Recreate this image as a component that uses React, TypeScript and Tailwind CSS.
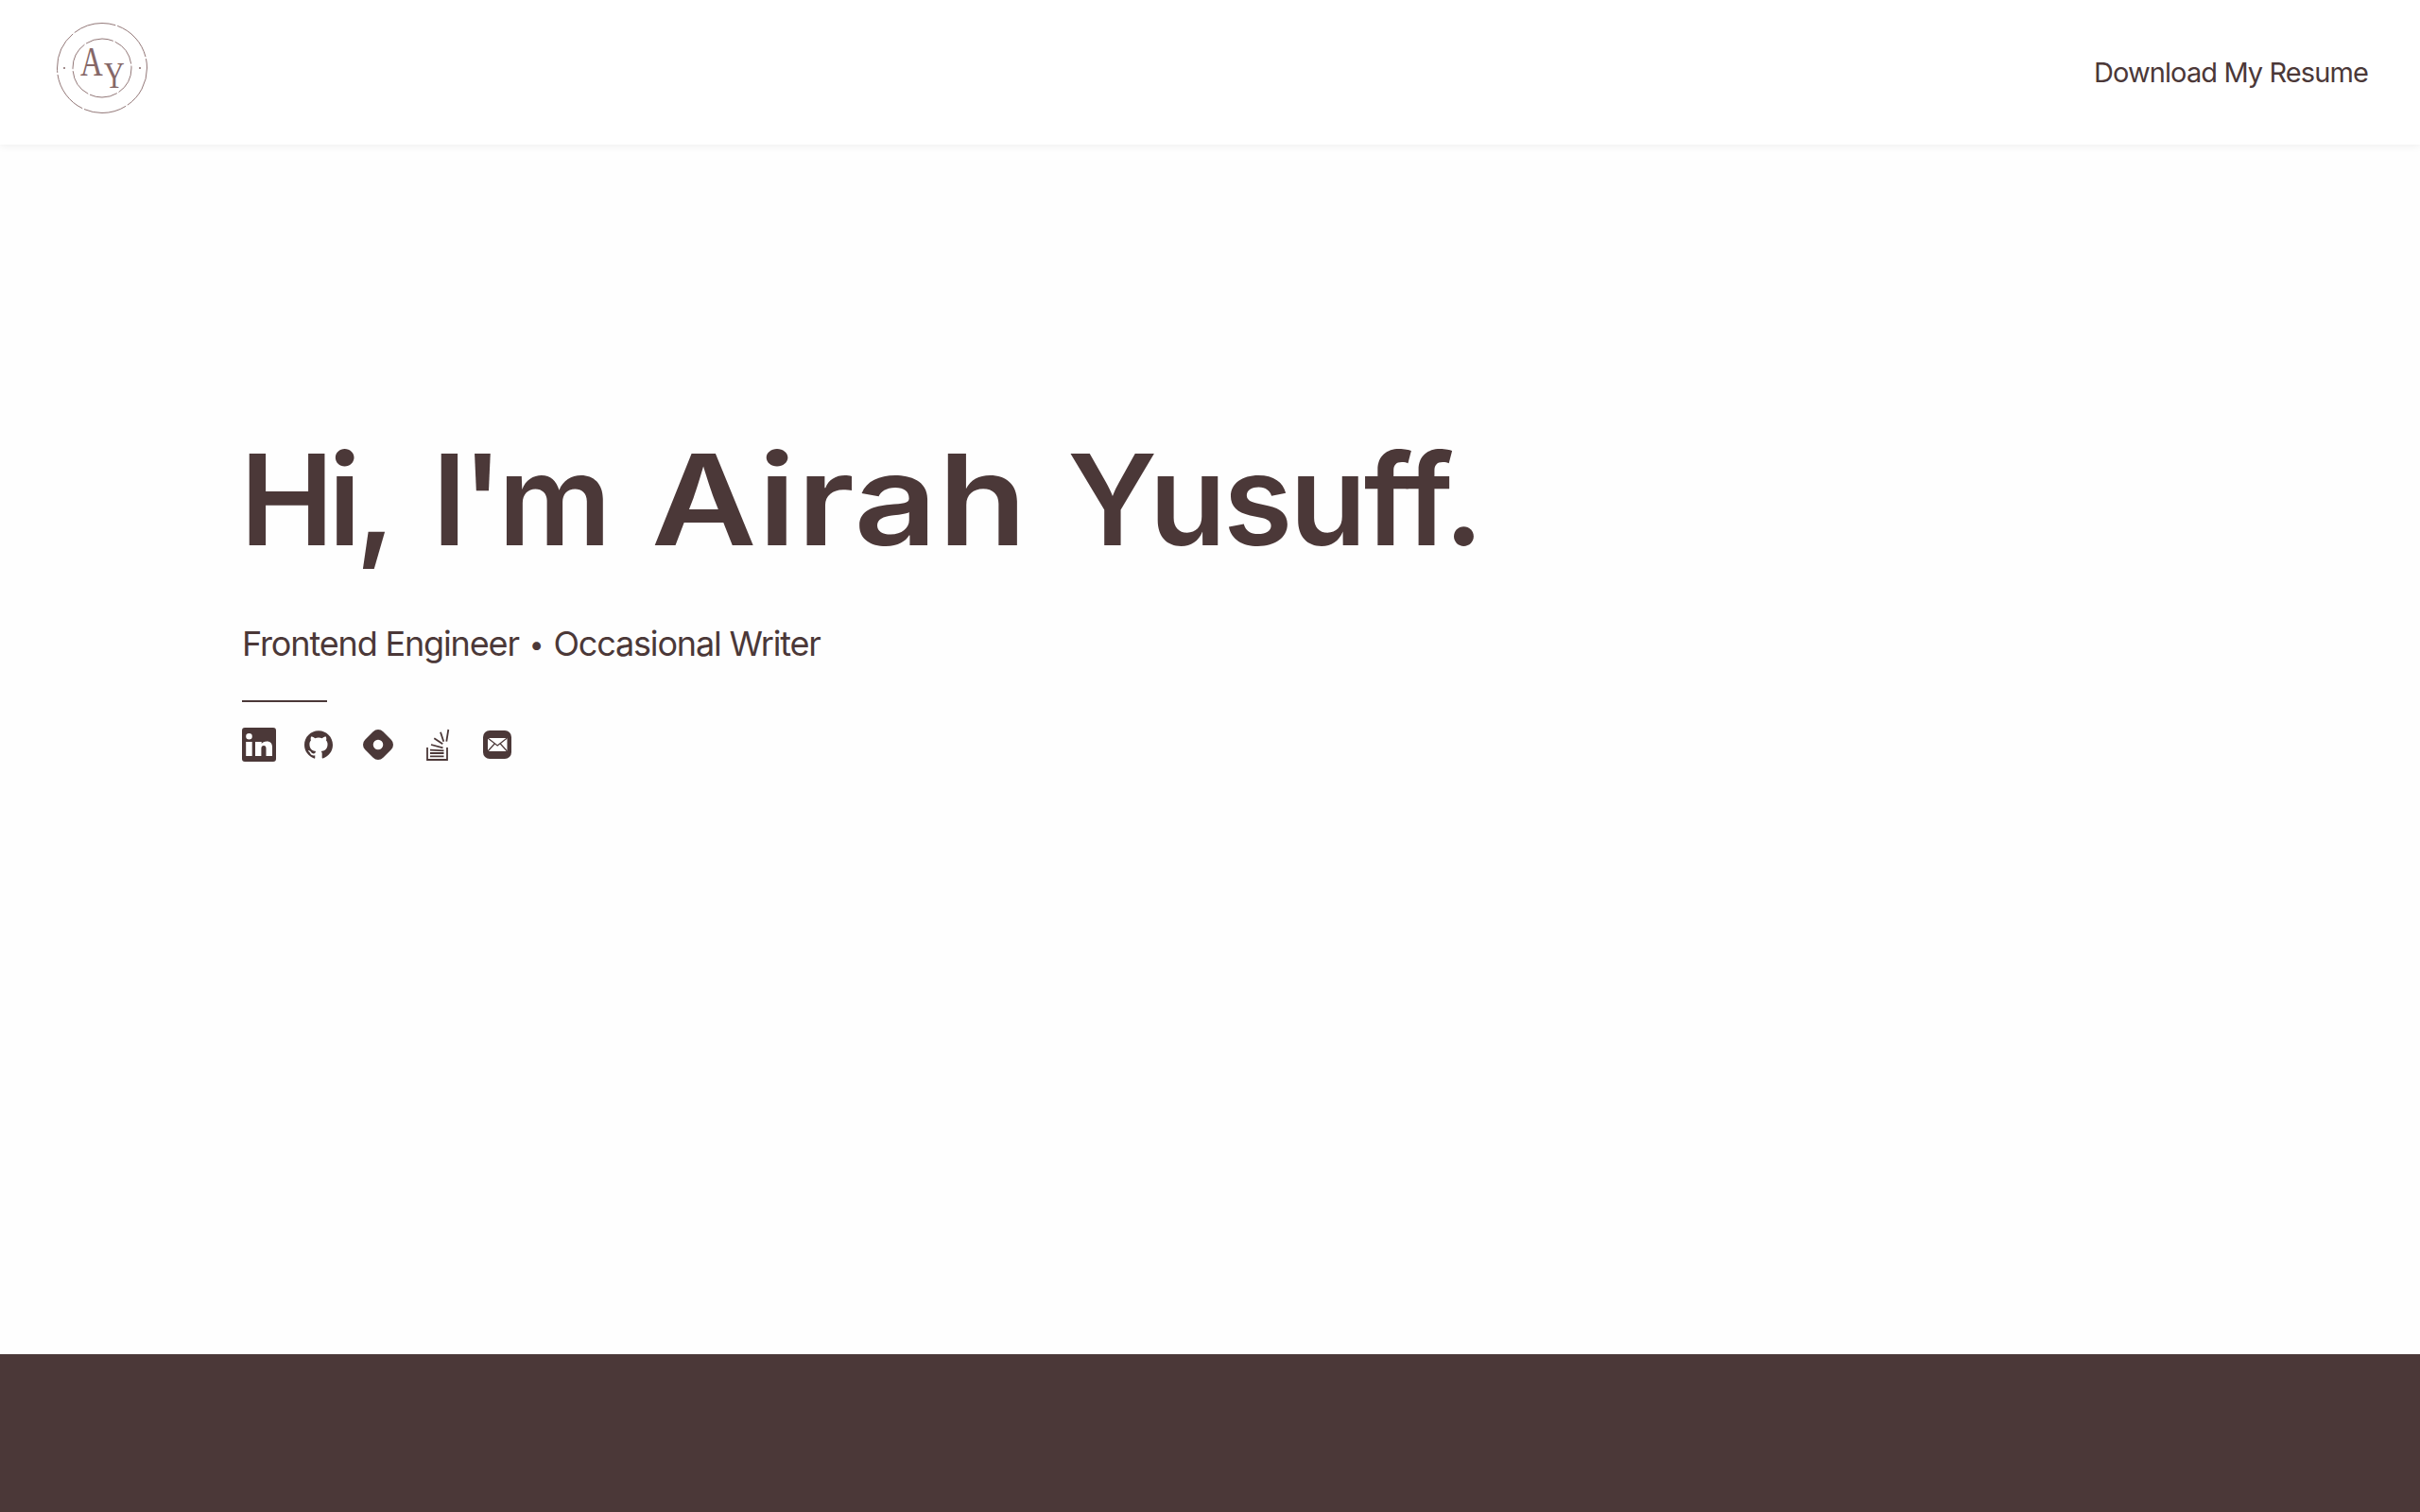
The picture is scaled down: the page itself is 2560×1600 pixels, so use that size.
import React from 'react';
import { SiGithub, SiHashnode } from 'react-icons/si';

function Logo() {
  return (
    <svg width="100" height="100" viewBox="0 0 100 100" className="block">
      <circle cx="50" cy="50" r="47.5" fill="none" stroke="#866868" strokeWidth="0.9" strokeDasharray="46 2" />
      <circle cx="50" cy="50" r="31" fill="none" stroke="#866868" strokeWidth="0.9" strokeDasharray="30 2" />
      <circle cx="10" cy="50" r="1" fill="#866868" />
      <circle cx="90" cy="50" r="1" fill="#866868" />
      <text transform="translate(27 58) scale(0.73 1)" fontFamily="'Liberation Serif', serif" fontSize="45" fill="#866868">A</text>
      <text transform="translate(52 71) scale(0.75 1)" fontFamily="'Liberation Serif', serif" fontSize="40" fill="#866868">Y</text>
    </svg>
  );
}

function LinkedinIcon() {
  return (
    <svg width="36" height="36" viewBox="0 0 36 36">
      <path
        fillRule="evenodd"
        fill="#4b3838"
        d="M3 0h30a3 3 0 0 1 3 3v30a3 3 0 0 1-3 3H3a3 3 0 0 1-3-3V3a3 3 0 0 1 3-3zM7.500 6a3.300 3.300 0 1 0 0 6.600a3.300 3.300 0 0 0 0-6.600zM4.200 15v15h6.500V15zM14 15v15h6.400v-8c0-2 1-3 2.600-3s2.500 1 2.500 3v8H32v-9.500c0-4-2.200-6-5.700-6c-2.700 0-4.400 1-5.600 2.600V15z"
      />
    </svg>
  );
}

function StackIcon() {
  return (
    <svg width="26" height="34" viewBox="0 0 26 34" fill="none" stroke="#4b3838" strokeWidth="1.8">
      <path d="M1 20v13h21V20" />
      <path d="M4 29.300h14.500M4 26h14.500M4 22.700l14.500.6M5 17l12.500 3.300M8.300 10.300l9 6M15 3.700l3.300 10M23.300 1l-2 12.700" />
    </svg>
  );
}

function MailIcon() {
  return (
    <svg width="30" height="30" viewBox="0 0 30 30">
      <rect width="30" height="30" rx="7" fill="#4b3838" />
      <rect x="5" y="8" width="20.500" height="14" fill="#fff" />
      <path d="M5 8l10.200 8 10.200-8M5 22l7.200-8M25.500 22l-7.200-8" fill="none" stroke="#4b3838" strokeWidth="1.200" />
    </svg>
  );
}

export default function App() {
  return (
    <div className="flex flex-col h-[1600px] bg-[#fefefe] text-[#4b3838] font-['Inter',sans-serif]">
      <header className="h-[153px] flex items-center justify-between pl-[58px] pr-[55px] bg-white shadow-[0_2px_8px_rgba(0,0,0,0.06)] relative">
        <div className="-mt-[10px]">
          <Logo />
        </div>
        <a className="text-[29px] tracking-[-0.9px] text-[#4b3838] mt-[1px]">Download My Resume</a>
      </header>

      <main className="flex-1 pl-[254px] pt-[296px]">
        <h1 className="text-[133px] leading-[160px] font-semibold whitespace-nowrap [font-variant-ligatures:none]">
          <span className="tracking-[-6px] mr-[11px]">Hi,</span> <span className="tracking-[-5px] mr-[14px]">I'm</span> <span className="inline-block tracking-[1px] scale-x-[1.15] origin-left mr-[60px]">Airah</span> <span className="tracking-[-3px]">Yusuff.</span>
        </h1>
        <p className="pl-[2px] mt-[48px] text-[36px] leading-[48px] tracking-[-1.15px]">
          Frontend Engineer <span className="text-[28px] align-[2px] mx-[2px]">•</span> Occasional Writer
        </p>
        <div className="ml-[2px] mt-[35px] w-[90px] h-[2px] bg-[#4b3838]"></div>
        <div className="ml-[2px] mt-[27px] flex items-center h-[36px]">
          <LinkedinIcon />
          <SiGithub className="ml-[30px] w-[30px] h-[30px]" />
          <SiHashnode className="ml-[32px] w-[32px] h-[32px]" />
          <div className="ml-[35px]">
            <StackIcon />
          </div>
          <div className="ml-[34px]">
            <MailIcon />
          </div>
        </div>
      </main>

      <footer className="h-[167px] bg-[#4b3838]"></footer>
    </div>
  );
}
